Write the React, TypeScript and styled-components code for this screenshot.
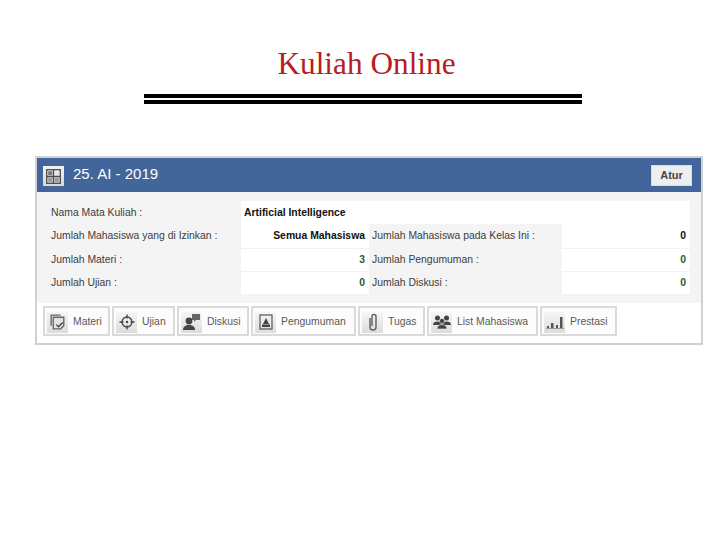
import { ReactNode } from "react";
import styled, { createGlobalStyle } from "styled-components";

const GlobalStyle = createGlobalStyle`
  html, body {
    margin: 0;
    background: #fff;
  }
`;

const infoRows = [
  { left: "Jumlah Mahasiswa yang di Izinkan :", value: "Semua Mahasiswa", right: "Jumlah Mahasiswa pada Kelas Ini :", rightValue: "0", first: true },
  { left: "Jumlah Materi :", value: "3", right: "Jumlah Pengumuman :", rightValue: "0" },
  { left: "Jumlah Ujian :", value: "0", right: "Jumlah Diskusi :", rightValue: "0" },
];

const MateriIcon = () => (
  <svg width="20" height="20" viewBox="0 0 19 19" fill="none" stroke="#666" strokeWidth="1.3">
    <path d="M3 13V3h9" />
    <path d="M5 16V5h10v8l-3 3H5z" fill="#e2e2e2" />
    <path d="M8 12l2 2 4-4" stroke="#444" />
  </svg>
);

const CrosshairIcon = () => (
  <svg width="18" height="18" viewBox="0 0 18 18" fill="none" stroke="#444" strokeWidth="1.300">
    <circle cx="9" cy="9" r="5" />
    <path d="M9 1.500v4M9 12.500v4M1.500 9h4M12.500 9h4" />
    <circle cx="9" cy="9" r="1.200" fill="#444" stroke="none" />
  </svg>
);

const DiskusiIcon = () => (
  <svg width="20" height="20" viewBox="0 0 20 20" fill="#444">
    <circle cx="7" cy="9" r="3.400" />
    <path d="M1 18c0-3.500 2.500-5 6-5s6 1.500 6 5z" />
    <path d="M10 2h8v6h-4l-2 2V8h-2z" fill="#666" />
  </svg>
);

const PengumumanIcon = () => (
  <svg width="18" height="18" viewBox="0 0 18 18" fill="none">
    <rect x="3" y="2" width="12" height="14" stroke="#555" strokeWidth="1.200" />
    <path d="M9 5l3 6H6z" fill="#444" />
    <rect x="5" y="11.500" width="8" height="2.500" fill="#444" />
  </svg>
);

const ClipIcon = () => (
  <svg width="18" height="20" viewBox="0 0 18 20" fill="none" stroke="#666" strokeWidth="1.500">
    <path d="M6 6v9a3 3 0 0 0 6 0V4.500a2 2 0 0 0-4 0V14" />
  </svg>
);

const UsersIcon = () => (
  <svg width="20" height="18" viewBox="0 0 20 18" fill="#444">
    <circle cx="5.500" cy="5" r="2.500" />
    <circle cx="14.500" cy="5" r="2.500" />
    <path d="M1 12c0-2.500 2-3.500 4.500-3.500S10 9.500 10 12H1zM10 12c0-2.500 2-3.500 4.500-3.500S19 9.500 19 12h-9z" />
    <circle cx="10" cy="8" r="2.600" stroke="#eee" strokeWidth=".6" />
    <path d="M5 16c0-3 2.200-4.500 5-4.500s5 1.500 5 4.500z" stroke="#eee" strokeWidth=".6" />
  </svg>
);

const BarsIcon = () => (
  <svg width="20" height="18" viewBox="0 0 20 18" fill="#555">
    <rect x="2" y="13" width="2" height="2" />
    <rect x="6" y="10" width="2.500" height="5" />
    <rect x="11" y="12" width="2" height="3" />
    <rect x="15" y="4" width="2.500" height="11" />
    <rect x="1" y="15" width="18" height="1" fill="#999" />
  </svg>
);

const GridIcon = () => (
  <svg width="15" height="15" viewBox="0 0 15 15" fill="none" stroke="#4a4a4a" strokeWidth="1.300">
    <rect x=".7" y=".7" width="13.600" height="13.600" />
    <path d="M.7 7.500h13.600M7.500.7v13.600" />
    <rect x="2.200" y="2.200" width="4" height="4" fill="#777" stroke="none" />
    <rect x="2.200" y="8.800" width="4" height="4" fill="#999" stroke="none" />
    <rect x="8.800" y="8.800" width="4" height="4" fill="#999" stroke="none" />
  </svg>
);

const tabs: { label: string; icon: ReactNode; width: number }[] = [
  { label: "Materi", icon: <MateriIcon />, width: 67 },
  { label: "Ujian", icon: <CrosshairIcon />, width: 63 },
  { label: "Diskusi", icon: <DiskusiIcon />, width: 72 },
  { label: "Pengumuman", icon: <PengumumanIcon />, width: 105 },
  { label: "Tugas", icon: <ClipIcon />, width: 67 },
  { label: "List Mahasiswa", icon: <UsersIcon />, width: 111 },
  { label: "Prestasi", icon: <BarsIcon />, width: 77 },
];

export default function App() {
  return (
    <Page>
      <GlobalStyle />
      <Title>Kuliah Online</Title>
      <Rule />
      <Panel>
        <PanelHeader>
          <HeaderIcon>
            <GridIcon />
          </HeaderIcon>
          <PanelTitle>25. AI - 2019</PanelTitle>
          <SettingsButton>Atur</SettingsButton>
        </PanelHeader>
        <InfoGrid>
          <LabelCell>Nama Mata Kuliah :</LabelCell>
          <CourseName>Artificial Intelligence</CourseName>
          {infoRows.map((row) => (
            <InfoRow key={row.left}>
              <LabelCell>{row.left}</LabelCell>
              <ValueCell $first={row.first}>{row.value}</ValueCell>
              <LabelCell>{row.right}</LabelCell>
              <ValueCell $first={row.first}>{row.rightValue}</ValueCell>
            </InfoRow>
          ))}
        </InfoGrid>
        <TabBar>
          {tabs.map((tab) => (
            <TabButton key={tab.label} $width={tab.width}>
              <TabIcon>{tab.icon}</TabIcon>
              {tab.label}
            </TabButton>
          ))}
        </TabBar>
      </Panel>
    </Page>
  );
}

const Page = styled.div`
  width: 720px;
  height: 540px;
  padding-top: 45px;
  box-sizing: border-box;
  overflow: hidden;
  font-family: "Liberation Sans", Arial, sans-serif;
`;

const Title = styled.h1`
  margin: 0;
  padding-left: 13px;
  height: 38px;
  line-height: 38px;
  text-align: center;
  font-family: "Liberation Serif", serif;
  font-size: 31.3px;
  font-weight: 400;
  color: #b81c24;
`;

const Rule = styled.div`
  width: 438px;
  height: 10px;
  margin: 11px 0 0 144px;
  box-sizing: border-box;
  border-top: 4px solid #000;
  border-bottom: 4px solid #000;
`;

const Panel = styled.section`
  width: 668px;
  height: 189px;
  margin: 52px 0 0 35px;
  box-sizing: border-box;
  border: 2px solid #cfd1d3;
  background: #fff;
`;

const PanelHeader = styled.header`
  display: flex;
  align-items: center;
  height: 34px;
  padding: 0 9px 0 6px;
  background: #43669a;
`;

const HeaderIcon = styled.div`
  display: flex;
  align-items: center;
  justify-content: center;
  width: 21px;
  height: 20px;
  margin-top: 2px;
  background: linear-gradient(#f2f2f2, #d8d8d8);
`;

const PanelTitle = styled.h2`
  flex: 1;
  margin: 0 0 3px 9px;
  font-size: 15px;
  font-weight: 400;
  color: #fff;
`;

const SettingsButton = styled.button`
  width: 41px;
  height: 21px;
  padding: 0;
  border: 1px solid #dcdcdc;
  background: #eeeeee;
  font-family: inherit;
  font-size: 11px;
  font-weight: 700;
  color: #444;
`;

const InfoGrid = styled.div`
  display: grid;
  grid-template-columns: 204px 128px 193px 128px;
  grid-template-rows: repeat(4, 23.25px);
  padding: 9px 0;
  margin-bottom: 3px;
  background: #f4f4f4;
  font-size: 10.4px;
  color: #3c3c3c;
`;

const LabelCell = styled.div`
  padding-left: 14px;
  line-height: 23px;
  white-space: nowrap;
`;

const CourseName = styled.div`
  grid-column: span 3;
  padding-left: 3px;
  background: #fff;
  line-height: 23px;
  font-weight: 700;
  color: #111;
`;

const InfoRow = styled.div`
  display: contents;

  & > ${LabelCell}:nth-child(3) {
    padding-left: 3px;
  }
`;

const ValueCell = styled.div<{ $first?: boolean }>`
  padding-right: 4px;
  box-sizing: border-box;
  border-top: 1px solid ${(p) => (p.$first ? "#fff" : "#f1f1f1")};
  background: #fff;
  line-height: 22px;
  text-align: right;
  font-weight: 700;
  white-space: nowrap;
  color: ${(p) => (p.$first ? "#111" : "#2e5b2e")};
`;

const TabBar = styled.nav`
  display: flex;
  gap: 2px;
  padding-left: 6px;
`;

const TabButton = styled.div<{ $width: number }>`
  display: flex;
  align-items: center;
  gap: 5px;
  width: ${(p) => p.$width}px;
  height: 30px;
  padding-left: 2px;
  box-sizing: border-box;
  border: 2px solid #dadada;
  background: #fcfcfc;
  font-size: 10.4px;
  color: #5a5a5a;
  white-space: nowrap;
`;

const TabIcon = styled.span`
  display: flex;
  align-items: center;
  justify-content: center;
  width: 21px;
  height: 21px;
  margin-top: 2px;
  background: linear-gradient(#f6f6f6, #dcdcdc);
`;
